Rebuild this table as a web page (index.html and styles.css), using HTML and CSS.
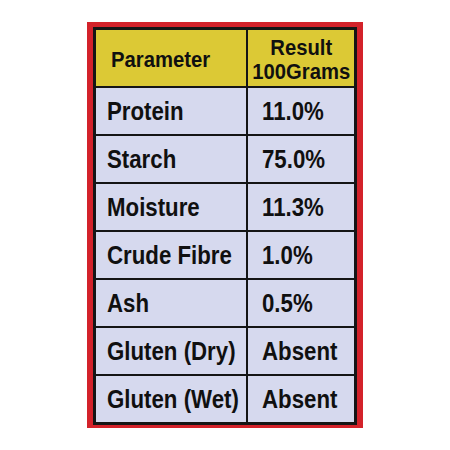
FILE: index.html
```html
<!DOCTYPE html>
<html>
<head>
<meta charset="utf-8">
<link rel="stylesheet" href="styles.css">
</head>
<body>
<div class="frame">
  <div class="table">
    <div class="cell head left"><span class="txt">Parameter</span></div>
    <div class="cell head right"><span class="txt">Result<br>100Grams</span></div>
    <div class="cell left"><span class="txt">Protein</span></div>
    <div class="cell val"><span class="txt">11.0%</span></div>
    <div class="cell left"><span class="txt">Starch</span></div>
    <div class="cell val"><span class="txt">75.0%</span></div>
    <div class="cell left"><span class="txt">Moisture</span></div>
    <div class="cell val"><span class="txt">11.3%</span></div>
    <div class="cell left"><span class="txt">Crude Fibre</span></div>
    <div class="cell val"><span class="txt">1.0%</span></div>
    <div class="cell left"><span class="txt">Ash</span></div>
    <div class="cell val"><span class="txt">0.5%</span></div>
    <div class="cell left"><span class="txt">Gluten (Dry)</span></div>
    <div class="cell val"><span class="txt">Absent</span></div>
    <div class="cell left"><span class="txt">Gluten (Wet)</span></div>
    <div class="cell val"><span class="txt">Absent</span></div>
  </div>
</div>
</body>
</html>
```
FILE: styles.css
```css
html, body {
  margin: 0;
  padding: 0;
  background: #ffffff;
}
body {
  width: 450px;
  height: 450px;
  font-family: "Liberation Sans", Arial, sans-serif;
  font-weight: bold;
  color: #101010;
}
.frame {
  margin: 22px 0 0 87px;
  width: 264px;
  padding: 5px 6px 3px 6px;
  background: #d3222a;
}
.table {
  display: grid;
  grid-template-columns: 150px 106px;
  grid-template-rows: 56px repeat(7, 46px);
  gap: 2px;
  padding: 3px;
  background: #151515;
}
.cell {
  display: flex;
  align-items: center;
  background: #d6d9ee;
  font-size: 25px;
  line-height: 26px;
  white-space: nowrap;
}
.txt {
  display: inline-block;
  transform: scaleX(0.89);
  transform-origin: left center;
}
.cell.left {
  padding-left: 11px;
}
.cell.val {
  padding-left: 14px;
}
.cell.head {
  background: #dcc935;
  font-size: 22.5px;
  line-height: 24px;
  padding-top: 3px;
}
.cell.head .txt {
  transform: scaleX(0.9);
}
.cell.head.left {
  padding-left: 15px;
}
.cell.head.right {
  justify-content: center;
  text-align: center;
  font-size: 22px;
}
.cell.head.right .txt {
  transform: scaleX(0.92);
  transform-origin: center center;
}
```
